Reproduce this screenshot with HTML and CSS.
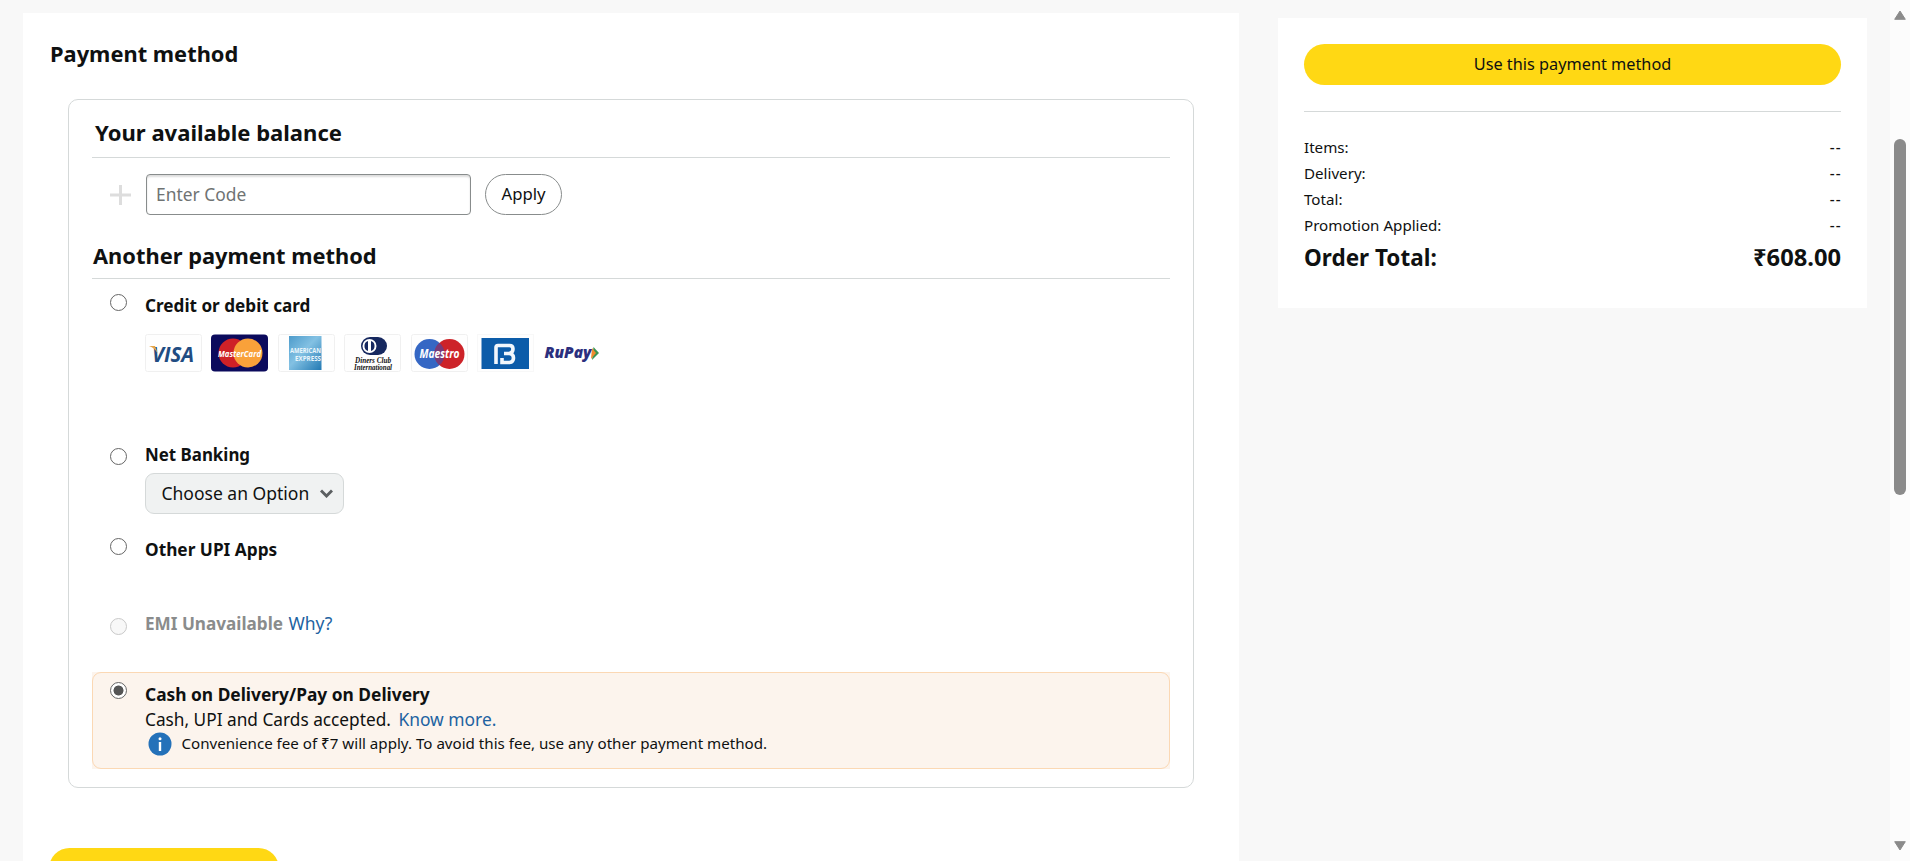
FILE: index.html
```
<!DOCTYPE html>
<html lang="en">
<head>
<meta charset="utf-8">
<title>Payment method</title>
<link rel="stylesheet" href="styles.css">
</head>
<body>
<div class="page">
  <main class="panel">
    <h1 class="heading title">Payment method</h1>
    <section class="methods">
      <h2 class="heading ruled balance">Your available balance</h2>
      <div class="code-row">
        <svg class="plus" width="22" height="20" viewBox="0 0 22 20"><path d="M0 10H21M10.500 0V20" stroke="#ddd" stroke-width="3"/></svg>
        <input class="code" type="text" placeholder="Enter Code">
        <button class="apply">Apply</button>
      </div>
      <h2 class="heading ruled another">Another payment method</h2>

      <div class="option credit">
        <span class="radio"></span>
        <div class="detail">
          <div class="label">Credit or debit card</div>
          <div class="cards">
            <svg class="card" viewBox="0 0 57 38"><rect x=".5" y=".5" width="56" height="37" rx="2" fill="#fefefe" stroke="#f0f0f0"/><text x="7" y="27.500" textLength="42" lengthAdjust="spacingAndGlyphs" class="sans visa">VISA</text><path d="M4 12H10L13 20Q10 14 4 12Z" fill="#e6a64a"/></svg>
            <svg class="card" viewBox="0 0 57 38"><rect y=".5" width="57" height="37" rx="4" fill="#0b0a5c"/><circle cx="22" cy="19" r="14.500" fill="#cf2127"/><circle cx="37" cy="19" r="14.500" fill="#f9a13a"/><text x="7" y="22.500" textLength="43" lengthAdjust="spacingAndGlyphs" class="sans brand">MasterCard</text></svg>
            <svg class="card" viewBox="0 0 57 38"><defs><linearGradient id="amex" x2="1" y2="1"><stop stop-color="#4d9bcb"/><stop offset=".45" stop-color="#83c1e3"/><stop offset="1" stop-color="#2279b3"/></linearGradient></defs><rect x=".5" y=".5" width="56" height="37" rx="2" fill="#fefefe" stroke="#f0f0f0"/><rect x="11" y="2" width="32.500" height="34" fill="url(#amex)"/><text x="12" y="19" textLength="31" lengthAdjust="spacingAndGlyphs" class="sans amex">AMERICAN</text><text x="17" y="26.500" textLength="26" lengthAdjust="spacingAndGlyphs" class="sans amex">EXPRESS</text></svg>
            <svg class="card" viewBox="0 0 57 38"><rect x=".5" y=".5" width="56" height="37" rx="2" fill="#fefefe" stroke="#f0f0f0"/><rect x="17" y="3" width="26" height="18" rx="9" fill="#16285f"/><circle cx="25.500" cy="12" r="7" fill="#fff"/><path d="M24 7A5.300 5.300 0 0 0 24 17ZM27 7A5.300 5.300 0 0 1 27 17Z" fill="#16285f"/><text x="11" y="28.500" textLength="36" lengthAdjust="spacingAndGlyphs" class="diners">Diners Club</text><text x="10" y="35.500" textLength="38" lengthAdjust="spacingAndGlyphs" class="diners">International</text></svg>
            <svg class="card" viewBox="0 0 57 38"><rect x=".5" y=".5" width="56" height="37" rx="2" fill="#fefefe" stroke="#f0f0f0"/><circle cx="18.500" cy="20" r="15" fill="#3567c4"/><circle cx="38.500" cy="20" r="15" fill="#cd2329"/><path d="M28.500 8.800A15 15 0 0 1 28.500 31.200A15 15 0 0 1 28.500 8.800Z" fill="#783a78"/><text x="8.500" y="24" textLength="40" lengthAdjust="spacingAndGlyphs" class="sans maestro">Maestro</text></svg>
            <svg class="card" viewBox="0 0 57 38"><rect x=".5" y=".5" width="56" height="37" fill="#fefefe" stroke="#f8f8f8"/><rect x="4.500" y="4" width="47.500" height="31" fill="#0c5ca9"/><path d="M19 30V13.500Q19 11.500 21 11.500H32.500Q36 11.500 36 15T32.500 19.500H27M32.500 19.500Q36.500 20 36.500 24T32.500 28.500H25V24" fill="none" stroke="#f2f7fc" stroke-width="3.600"/></svg>
            <svg class="card" viewBox="0 0 57 38"><text x="1.500" y="23.500" textLength="47" lengthAdjust="spacingAndGlyphs" class="sans rupay">RuPay</text><path d="M50.500 13L56 19L49 26Z" fill="#3b9454"/><path d="M49 14L53 19L48 25Z" fill="#f08a2d"/></svg>
          </div>
        </div>
      </div>

      <div class="option netbank">
        <span class="radio"></span>
        <div class="detail">
          <div class="label">Net Banking</div>
          <button class="select"><span class="lift">Choose an Option</span><svg width="13" height="9" viewBox="0 0 13 9"><path d="M1 1.500L6.500 7L12 1.500" fill="none" stroke="#5b5f61" stroke-width="2.900"/></svg></button>
        </div>
      </div>

      <div class="option upi">
        <span class="radio"></span>
        <div class="detail"><div class="label">Other UPI Apps</div></div>
      </div>

      <div class="option emi">
        <span class="radio disabled"></span>
        <div class="detail"><div class="label muted">EMI Unavailable <a class="link">Why?</a></div></div>
      </div>

      <div class="highlight">
        <div class="option cod">
          <span class="radio checked"></span>
          <div class="detail">
            <div class="label">Cash on Delivery/Pay on Delivery</div>
            <div class="text">Cash, UPI and Cards accepted. <a class="link more">Know more.</a></div>
            <div class="note"><svg width="24" height="24" viewBox="0 0 24 24"><circle cx="12" cy="12" r="11.500" fill="#2471b9"/><path d="M12 10V19" stroke="#fff" stroke-width="2.400"/><circle cx="12" cy="6.700" r="1.500" fill="#fff"/></svg>Convenience fee of ₹7 will apply. To avoid this fee, use any other payment method.</div>
          </div>
        </div>
      </div>
    </section>
    <div class="bottom-button"></div>
  </main>

  <aside class="summary">
    <button class="use">Use this payment method</button>
    <dl class="totals">
      <div class="row"><dt>Items:</dt><dd>--</dd></div>
      <div class="row"><dt>Delivery:</dt><dd>--</dd></div>
      <div class="row"><dt>Total:</dt><dd>--</dd></div>
      <div class="row"><dt>Promotion Applied:</dt><dd>--</dd></div>
      <div class="row grand"><dt>Order Total:</dt><dd>₹608.00</dd></div>
    </dl>
  </aside>

  <div class="scrollbar">
    <svg width="12" height="10" viewBox="0 0 12 10"><path d="M6 1L11.300 9.300H.7Z" fill="#8b8b8b" stroke="#8b8b8b" stroke-linejoin="round"/></svg>
    <div class="thumb"></div>
    <svg class="down" width="12" height="10" viewBox="0 0 12 10"><path d="M6 9L11.300 .7H.7Z" fill="#8b8b8b" stroke="#8b8b8b" stroke-linejoin="round"/></svg>
  </div>
</div>
</body>
</html>
```
FILE: styles.css
```
* { box-sizing: border-box; }
body {
  margin: 0;
  background: #f8f8f8;
  color: #0f1111;
  font: 17.4px/26px "Noto Sans", sans-serif;
}
svg { display: block; flex: none; }
button, input { font: inherit; color: inherit; }

.page { display: flex; align-items: flex-start; height: 861px; overflow: hidden; }
.panel { width: 1216px; height: 848px; margin: 13px 0 0 23px; padding: 26px 45px 0 26px; background: #fff; overflow: hidden; }
.heading { margin: 0; font-size: 21.85px; line-height: 30px; font-weight: 700; }
.title { padding-left: 1px; }
.methods { height: 689px; margin: 30px 0 0 19px; padding: 17px 23px 0; border: 1px solid #d5d9d9; border-radius: 10px; }
.ruled { border-bottom: 1px solid #d5d9d9; }
.balance { padding: 0 0 10px 3px; font-size: 22.05px; }
.another { margin-top: 26px; padding: 0 0 7px 1px; font-size: 21.85px; }

.code-row { display: flex; align-items: center; margin-top: 16px; padding-left: 18px; }
.code { width: 325px; height: 41px; margin: 0 14px; padding: 0 9px 1px; border: 1px solid #888c8c; border-radius: 4px; background: #fff; box-shadow: inset 0 2px 2px rgba(15, 17, 17, .14); }
.code::placeholder { color: #6f7373; opacity: 1; }
.apply { width: 77px; height: 41px; padding: 0 0 1px; border: 1px solid #888c8c; border-radius: 21px; background: #fff; font-size: 16.7px; }

.option { display: grid; grid-template-columns: 53px 1fr; }
.radio { width: 17px; height: 17px; margin: 8px 0 0 18px; border: 1px solid #666; border-radius: 50%; background: #fff; }
.radio.disabled { border-color: #c9c9c9; background: #f8f8f8; }
.radio.checked { background: radial-gradient(circle, #555 0 4.700px, #fff 5.300px); }
.label { font-size: 17.150px; font-weight: 700; }
.muted { color: #8a8c8c; }
.link { color: #2162a1; font-size: 17.500px; font-weight: 400; }
.muted .link { margin-left: 1px; }

.credit { height: 161px; }
.credit .radio { margin-top: 15px; }
.credit .label { margin-top: 14px; }
.cards { display: flex; gap: 9.400px; margin-top: 15px; }
.card { width: 57px; height: 38px; }
.sans { font-family: "Open Sans", sans-serif; font-weight: 700; }
.visa { font-size: 22px; font-style: italic; fill: #1f4c82; }
.brand { font-size: 9px; font-style: italic; fill: #fff; }
.amex { font-size: 7.500px; fill: #eaf6fc; }
.diners { font: italic 700 8px "Liberation Serif", serif; fill: #111; }
.maestro { font-size: 12px; font-style: italic; fill: #fff; }
.rupay { font-size: 15px; font-weight: 800; font-style: italic; fill: #2b2f7e; }

.netbank { height: 90px; }
.netbank .label { margin-top: 2px; font-size: 16.900px; }
.select { display: flex; align-items: center; gap: 11px; width: 199px; height: 41px; margin-top: 5px; padding: 0 0 0 15.500px; border: 1px solid #d5d9d9; border-radius: 9px; background: #f0f2f2; font-size: 17.500px; }
.lift { padding-bottom: 2px; }
.upi { height: 80px; }
.upi .label { margin-top: 7px; font-size: 17.250px; }
.emi { height: 62px; }

.highlight { background: #fcf4ed; }
.cod { height: 97px; border: 1px solid #fbd8b4; border-radius: 9px; grid-template-columns: 52px 1fr; }
.cod .radio { margin: 9px 0 0 17px; }
.cod .label { margin-top: 8px; line-height: 26px; font-size: 17.350px; }
.text { font-size: 17.250px; line-height: 25px; }
.more { margin-left: 3px; font-size: 17.400px; }
.note { display: flex; gap: 10px; padding-left: 2.500px; font-size: 15.130px; line-height: 23px; }

.bottom-button { width: 230px; height: 41px; margin-top: 60px; border-radius: 21px; background: #ffd814; }

.summary { width: 589px; height: 290px; margin: 18px 0 0 39px; padding: 26px; background: #fff; }
.use { display: block; width: 100%; height: 41px; padding: 0 0 2px; border: 0; border-radius: 21px; background: #ffd814; font-size: 16.300px; }
.totals { margin: 26px 0 0; padding-top: 22px; border-top: 1px solid #d5d9d9; font-size: 15.150px; }
.row { display: flex; justify-content: space-between; line-height: 26px; }
.row dd { margin: 0 -.5px 0 0; font-weight: 500; letter-spacing: 1px; }
.grand { padding-top: 3px; font-size: 22.500px; font-weight: 700; line-height: 34px; }
.grand dd { margin: 0; font-size: 23.700px; font-weight: 700; letter-spacing: 0; line-height: 33px; }

.scrollbar { display: flex; flex-direction: column; align-items: center; width: 20px; height: 861px; margin-left: 23px; padding: 10px 0; background: #fcfcfc; }
.thumb { width: 12px; height: 356px; margin-top: 119px; border-radius: 6px; background: #8b8b8b; }
.down { margin-top: auto; }
```
